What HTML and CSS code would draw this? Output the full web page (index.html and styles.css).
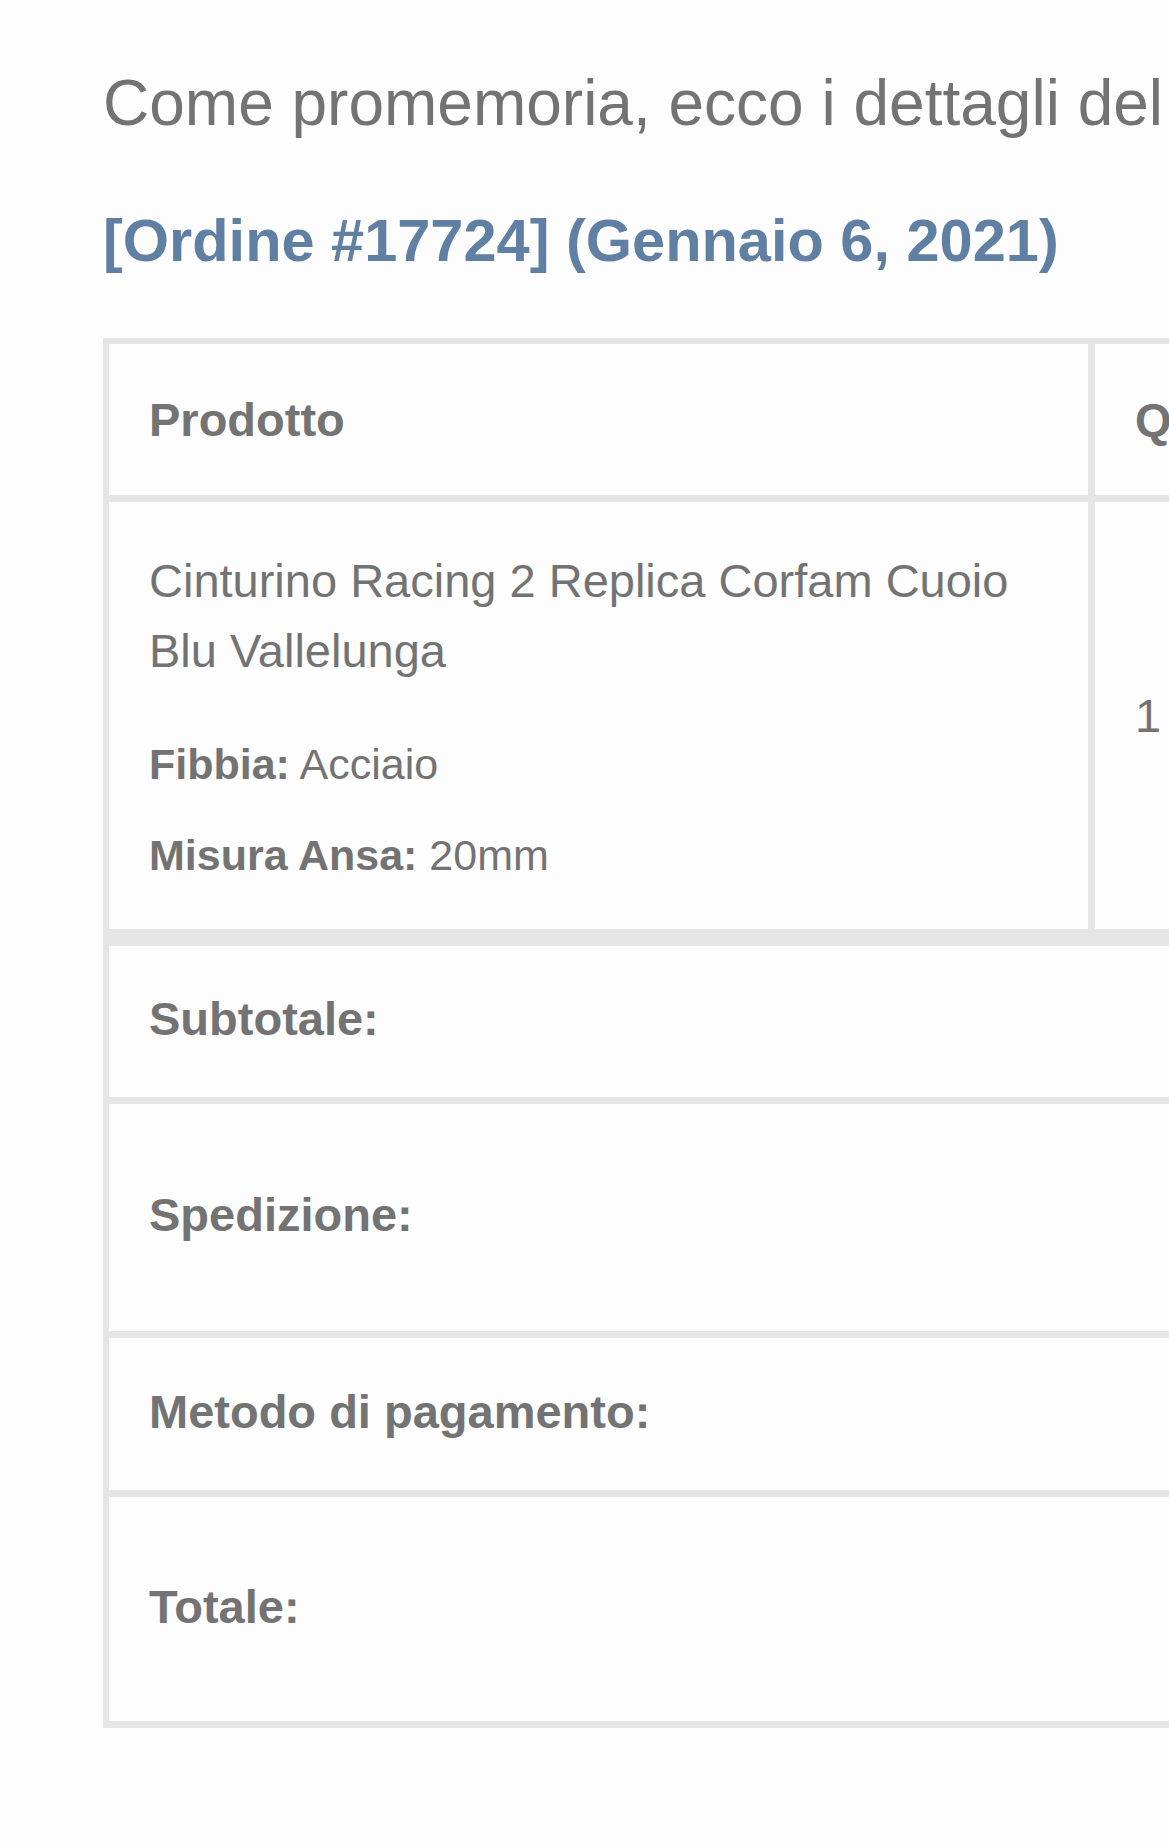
FILE: index.html
```html
<!DOCTYPE html>
<html lang="it">
<head>
<meta charset="utf-8">
<title>Ordine #17724</title>
<link rel="stylesheet" href="styles.css">
</head>
<body>
<div class="email">
  <p class="intro">Come promemoria, ecco i dettagli del tuo ordine:</p>
  <h2 class="order-title">[Ordine #17724] (Gennaio 6, 2021)</h2>
  <table class="order">
    <thead>
      <tr>
        <th class="c-product">Prodotto</th>
        <th class="c-qty">Quantità</th>
        <th class="c-price">Prezzo</th>
      </tr>
    </thead>
    <tbody>
      <tr>
        <td class="c-product item">
          <div class="item-name">Cinturino Racing 2 Replica Corfam Cuoio Blu Vallelunga</div>
          <ul class="meta">
            <li><strong>Fibbia:</strong> Acciaio</li>
            <li><strong>Misura Ansa:</strong> 20mm</li>
          </ul>
        </td>
        <td class="c-qty">1</td>
        <td class="c-price"></td>
      </tr>
    </tbody>
    <tfoot>
      <tr class="first">
        <th colspan="2">Subtotale:</th>
        <td class="c-price"></td>
      </tr>
      <tr>
        <th colspan="2">Spedizione:</th>
        <td class="c-price"><div class="val val-ship"></div></td>
      </tr>
      <tr>
        <th colspan="2">Metodo di pagamento:</th>
        <td class="c-price"><div class="val val-pay"></div></td>
      </tr>
      <tr>
        <th colspan="2">Totale:</th>
        <td class="c-price"><div class="val val-total"></div></td>
      </tr>
    </tfoot>
  </table>
</div>
</body>
</html>
```
FILE: styles.css
```css
html, body {
  margin: 0;
  padding: 0;
  background: #fdfdfd;
  overflow: hidden;
}

body {
  font-family: "Liberation Sans", Arial, Helvetica, sans-serif;
  color: #737373;
}

.email {
  width: 1600px;
  padding: 55px 0 0 103px;
}

.intro {
  margin: 0;
  font-size: 64px;
  line-height: 96px;
  white-space: nowrap;
}

.order-title {
  margin: 51px 0 0;
  font-size: 59.5px;
  line-height: 78px;
  font-weight: 700;
  color: #5f7fa3;
  white-space: nowrap;
}

.order {
  margin-top: 58px;
  width: 1592px;
  border: 3px solid #e5e5e5;
  border-collapse: separate;
  border-spacing: 0;
  table-layout: fixed;
  font-size: 47px;
  line-height: 71px;
  color: #737373;
}

.order th,
.order td {
  border: 3px solid #e5e5e5;
  border-bottom-width: 4px;
  padding: 40px;
  text-align: left;
  vertical-align: middle;
  background: #fdfdfd;
  white-space: nowrap;
}

.order th {
  font-weight: 700;
}

.order tfoot th {
  padding-bottom: 43px;
  padding-top: 37px;
}

.order .c-product {
  width: 986px;
  box-sizing: border-box;
  border-right-width: 4px;
  white-space: normal;
}

.order .c-qty {
  width: 300px;
  box-sizing: border-box;
}

.order .item {
  padding: 44px 40px 42px;
}

.item-name {
  line-height: 70px;
}

.meta {
  list-style: none;
  margin: 46px 0 0;
  padding: 0;
  font-size: 43px;
  line-height: 64px;
}

.meta li + li {
  margin-top: 27px;
}

.meta strong {
  font-weight: 700;
}

.order tfoot .first th,
.order tfoot .first td {
  border-top-width: 13px;
}

.val-ship {
  height: 147px;
}

.val-pay {
  height: 72px;
}

.val-total {
  height: 144px;
}
```
